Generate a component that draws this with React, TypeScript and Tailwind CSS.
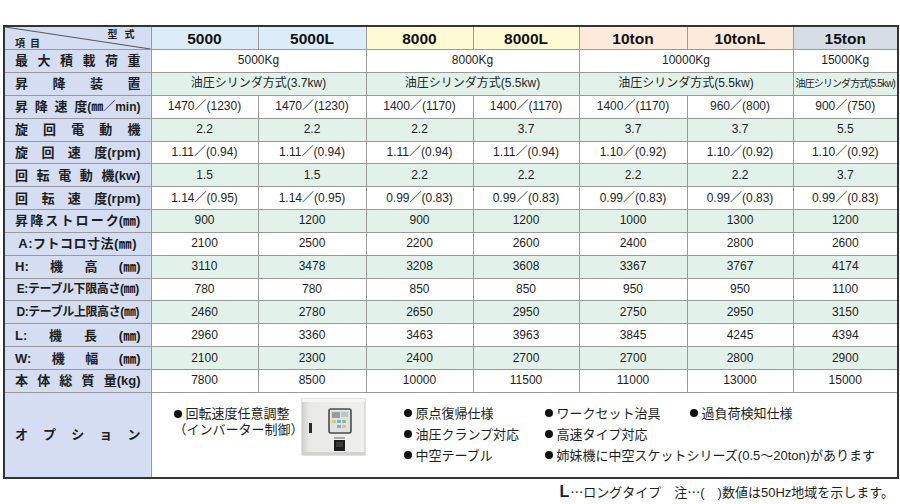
import type { ReactNode } from "react";

type Cell = [ReactNode, number];

interface SpecRow {
  label: ReactNode[];
  tight?: boolean;
  cells: Cell[];
}

const SM = ({ children }: { children: ReactNode }) => <span className="text-[12px]">{children}</span>;

const one = (vals: string[]): Cell[] => vals.map((v) => [v, 1]);

const ROWS: SpecRow[] = [
  {
    label: ["最", "大", "積", "載", "荷", "重"],
    cells: [["5000Kg", 2], ["8000Kg", 2], ["10000Kg", 2], ["15000Kg", 1]],
  },
  {
    label: ["昇", "降", "装", "置"],
    cells: [
      ["油圧シリンダ方式(3.7kw)", 2],
      ["油圧シリンダ方式(5.5kw)", 2],
      ["油圧シリンダ方式(5.5kw)", 2],
      [<span className="whitespace-nowrap text-[10px] tracking-[-0.9px]">油圧シリンダ方式(5.5kw)</span>, 1],
    ],
  },
  {
    label: ["昇", "降", "速", <>度<SM>(㎜／min)</SM></>],
    cells: one(["1470／(1230)", "1470／(1230)", "1400／(1170)", "1400／(1170)", "1400／(1170)", "960／(800)", "900／(750)"]),
  },
  { label: ["旋", "回", "電", "動", "機"], cells: one(["2.2", "2.2", "2.2", "3.7", "3.7", "3.7", "5.5"]) },
  {
    label: ["旋", "回", "速", "度(rpm)"],
    cells: one(["1.11／(0.94)", "1.11／(0.94)", "1.11／(0.94)", "1.11／(0.94)", "1.10／(0.92)", "1.10／(0.92)", "1.10／(0.92)"]),
  },
  { label: ["回", "転", "電", "動", "機(kw)"], cells: one(["1.5", "1.5", "2.2", "2.2", "2.2", "2.2", "3.7"]) },
  {
    label: ["回", "転", "速", "度(rpm)"],
    cells: one(["1.14／(0.95)", "1.14／(0.95)", "0.99／(0.83)", "0.99／(0.83)", "0.99／(0.83)", "0.99／(0.83)", "0.99／(0.83)"]),
  },
  {
    label: ["昇", "降", "ス", "ト", "ロ", "ー", "ク(㎜)"],
    cells: one(["900", "1200", "900", "1200", "1000", "1300", "1200"]),
  },
  { label: ["A:フトコロ寸法(㎜)"], cells: one(["2100", "2500", "2200", "2600", "2400", "2800", "2600"]) },
  { label: ["H:", "機", "高", "(㎜)"], cells: one(["3110", "3478", "3208", "3608", "3367", "3767", "4174"]) },
  { label: ["E:テーブル下限高さ(㎜)"], tight: true, cells: one(["780", "780", "850", "850", "950", "950", "1100"]) },
  { label: ["D:テーブル上限高さ(㎜)"], tight: true, cells: one(["2460", "2780", "2650", "2950", "2750", "2950", "3150"]) },
  { label: ["L:", "機", "長", "(㎜)"], cells: one(["2960", "3360", "3463", "3963", "3845", "4245", "4394"]) },
  { label: ["W:", "機", "幅", "(㎜)"], cells: one(["2100", "2300", "2400", "2700", "2700", "2800", "2900"]) },
  {
    label: ["本", "体", "総", "質", "量(kg)"],
    cells: one(["7800", "8500", "10000", "11500", "11000", "13000", "15000"]),
  },
];

const MODELS = [
  { name: "5000", bg: "bg-[#dcedf9]" },
  { name: "5000L", bg: "bg-[#dcedf9]" },
  { name: "8000", bg: "bg-[#fefbd4]" },
  { name: "8000L", bg: "bg-[#fefbd4]" },
  { name: "10ton", bg: "bg-[#fdeadb]" },
  { name: "10tonL", bg: "bg-[#fdeadb]" },
  { name: "15ton", bg: "bg-[#d6dde6]" },
];

const Label = ({ parts, tight }: { parts: ReactNode[]; tight?: boolean }) => (
  <div
    className={
      parts.length > 1
        ? "flex justify-between px-[10px] text-[13px] font-bold"
        : tight
        ? "flex justify-center px-[8px] text-[12px] font-bold tracking-[-0.4px]"
        : "flex justify-center px-[10px] text-[13px] font-bold tracking-[0.5px]"
    }
  >
    {parts.map((p, i) => (
      <span key={i} className="whitespace-nowrap">
        {p}
      </span>
    ))}
  </div>
);

const Bullet = ({ children }: { children: ReactNode }) => (
  <div className="flex items-center whitespace-nowrap">
    <span className="mr-[4px] inline-block h-[8px] w-[8px] rounded-full bg-[#111]" />
    {children}
  </div>
);

// 制御盤の写真の代わり
const ControlBox = () => (
  <svg width="65" height="60" viewBox="0 0 65 60" className="mt-[4px] shrink-0">
    <defs>
      <linearGradient id="body" x1="0" x2="1" y1="0" y2="0">
        <stop offset="0" stopColor="#cfd1cf" />
        <stop offset="0.12" stopColor="#e9eae8" />
        <stop offset="1" stopColor="#efefed" />
      </linearGradient>
    </defs>
    <rect x="1" y="2" width="63" height="56" fill="url(#body)" stroke="#c4c6c4" strokeWidth="1" />
    <rect x="1" y="2" width="63" height="3" fill="#f6f6f4" />
    <rect x="1" y="55" width="63" height="3" fill="#d2d3d1" />
    <rect x="8" y="26" width="3" height="10" fill="#2a2a2a" />
    <rect x="28" y="12" width="22" height="24" rx="2" fill="#dfe2e2" stroke="#4a4a4a" strokeWidth="1.6" />
    <rect x="31" y="15" width="8" height="6" fill="#9a9c9c" />
    <rect x="40" y="15" width="7" height="5" fill="#bfc4c6" />
    <rect x="31" y="23" width="4" height="3" fill="#e0c860" />
    <rect x="36" y="23" width="4" height="3" fill="#78b4d6" />
    <rect x="41" y="23" width="4" height="3" fill="#8cbf8c" />
    <rect x="36" y="28" width="4" height="3" fill="#78b4d6" />
    <rect x="41" y="28" width="4" height="3" fill="#e0c860" />
    <rect x="33" y="40" width="11" height="2" fill="#a8aaa8" />
    <rect x="33" y="43" width="11" height="11" fill="#1d1d1d" />
    <rect x="35" y="45" width="7" height="5" fill="#3a3a3a" />
  </svg>
);

const Dots = () => <span className="font-['Noto_Sans_CJK_JP',sans-serif]">…</span>;

export default function App() {
  return (
    <div className="h-[504px] w-[900px] overflow-hidden bg-white font-['Liberation_Sans','Noto_Sans_CJK_JP',sans-serif] text-[#1e1e1e]">
      <table className="ml-[3px] mt-[25px] w-[894px] table-fixed border-collapse border-2 border-[#333]">
        <colgroup>
          <col className="w-[147px]" />
          <col className="w-[107px]" />
          <col className="w-[108px]" />
          <col className="w-[107px]" />
          <col className="w-[106px]" />
          <col className="w-[108px]" />
          <col className="w-[106px]" />
          <col className="w-[105px]" />
        </colgroup>
        <tbody>
          <tr className="h-[23px]">
            <td className="relative border border-[#9a9a9a] bg-[#d4ddf1] p-0">
              <svg className="absolute inset-0 h-full w-full" preserveAspectRatio="none" viewBox="0 0 100 100">
                <line x1="0" y1="0" x2="100" y2="100" stroke="#555" strokeWidth="1" vectorEffect="non-scaling-stroke" />
              </svg>
              <div className="relative h-[22px] text-[10px] font-bold">
                <span className="absolute left-[10px] top-[9px] tracking-[5px]">項目</span>
                <span className="absolute right-[9px] top-[0px] tracking-[7px]">型式</span>
              </div>
            </td>
            {MODELS.map((m) => (
              <td
                key={m.name}
                className={`border border-[#9a9a9a] p-0 text-center text-[15.5px] font-bold leading-[21px] text-[#111] ${m.bg}`}
              >
                {m.name}
              </td>
            ))}
          </tr>
          {ROWS.map((row, ri) => (
            <tr key={ri} className={`h-[22.85px] ${ri % 2 === 1 ? "bg-[#e2f2ea]" : "bg-white"}`}>
              <td className="border border-[#9a9a9a] bg-[#d4ddf1] p-0 leading-[21px]">
                <Label parts={row.label} tight={row.tight} />
              </td>
              {row.cells.map(([v, span], ci) => (
                <td
                  key={ci}
                  colSpan={span}
                  className="overflow-hidden whitespace-nowrap border border-[#9a9a9a] p-0 text-center text-[12px] leading-[21px]"
                >
                  {v}
                </td>
              ))}
            </tr>
          ))}
          <tr className="h-[86px]">
            <td className="border border-[#9a9a9a] bg-[#d4ddf1] p-0">
              <div className="flex justify-between px-[10px] text-[13px] font-bold">
                {["オ", "プ", "シ", "ョ", "ン"].map((c) => (
                  <span key={c}>{c}</span>
                ))}
              </div>
            </td>
            <td colSpan={7} className="border border-[#9a9a9a] bg-white p-0 align-top text-[13px]">
              <div className="flex items-start pl-[22px]">
                <div className="mt-[13px] w-[127px] shrink-0 leading-[16px]">
                  <Bullet>回転速度任意調整</Bullet>
                  <div className="whitespace-nowrap">（インバーター制御）</div>
                </div>
                <ControlBox />
                <div className="ml-[38px] mt-[10px] grid grid-cols-[141px_145px_auto] auto-rows-[21px] leading-[21px]">
                  <Bullet>原点復帰仕様</Bullet>
                  <Bullet>ワークセット治具</Bullet>
                  <Bullet>過負荷検知仕様</Bullet>
                  <Bullet>油圧クランプ対応</Bullet>
                  <Bullet>高速タイプ対応</Bullet>
                  <div />
                  <Bullet>中空テーブル</Bullet>
                  <div className="col-span-2">
                    <Bullet>姉妹機に中空スケットシリーズ(0.5～20ton)があります</Bullet>
                  </div>
                </div>
              </div>
            </td>
          </tr>
        </tbody>
      </table>
      <div className="mt-[3px] flex items-baseline justify-end pr-[6px] text-[13px] leading-[20px]">
        <span className="mr-[1px] text-[16px] font-bold">L</span>
        <Dots />
        <span>ロングタイプ　注</span>
        <Dots />
        <span>(　)数値は50Hz地域を示します。</span>
      </div>
    </div>
  );
}
